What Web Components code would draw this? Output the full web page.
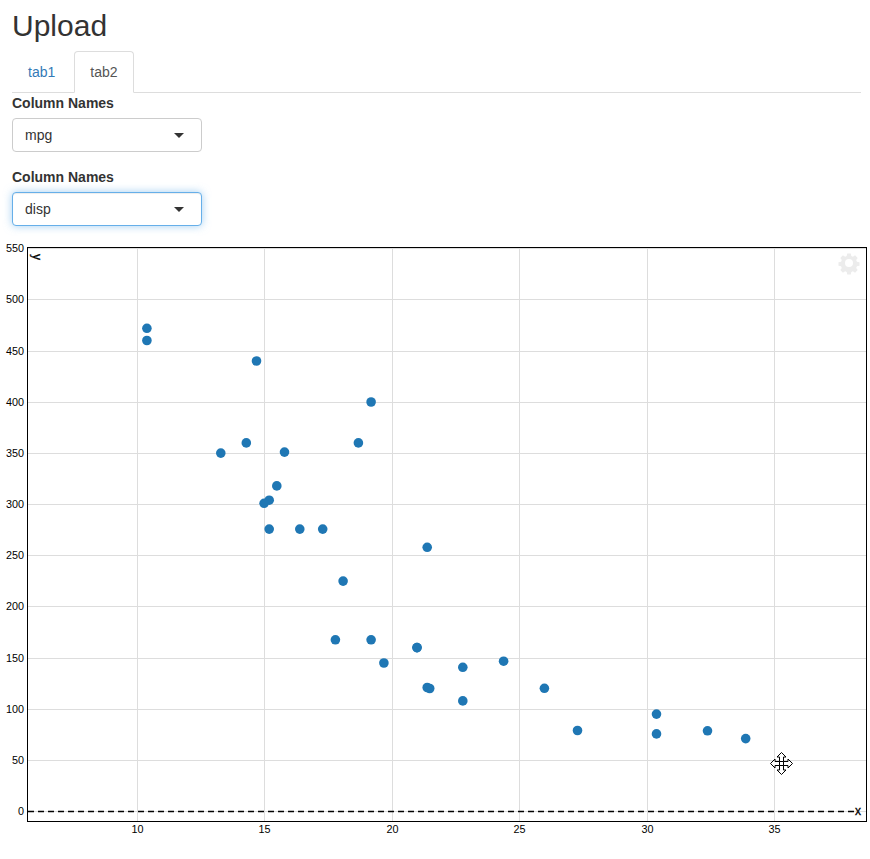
<!DOCTYPE html>
<html>
<head>
<meta charset="utf-8">
<title>Upload</title>
<style>
  html, body { margin: 0; padding: 0; background: #fff; }
  body { font: 14px/20px "Liberation Sans", Arial, sans-serif; color: #333; }
</style>
</head>
<body>
<upload-page></upload-page>

<script>
// Page heading + tab strip + inputs + plot
class UploadPage extends HTMLElement {
  constructor() {
    super();
    this.attachShadow({ mode: 'open' });
    this.shadowRoot.innerHTML = `
      <style>
        :host { display: block; }
        .wrap { padding: 0 9px 0 12px; }
        h2 {
          margin: 0 0 9px 0;
          padding-top: 9px;
          font: 500 30px/33px "Liberation Sans", Arial, sans-serif;
          color: #333;
        }
      </style>
      <div class="wrap">
        <h2>Upload</h2>
        <tab-strip></tab-strip>
        <column-select label="Column Names" value="mpg"></column-select>
        <column-select label="Column Names" value="disp" focused></column-select>
      </div>
      <scatter-plot></scatter-plot>
    `;
  }
}

class TabStrip extends HTMLElement {
  constructor() {
    super();
    this.attachShadow({ mode: 'open' });
    this.shadowRoot.innerHTML = `
      <style>
        :host { display: flex; border-bottom: 1px solid #ddd; height: 41px; }
        a {
          display: block;
          box-sizing: border-box;
          height: 42px;
          padding: 10px 15px;
          margin-right: 3px;
          border: 1px solid transparent;
          border-radius: 4px 4px 0 0;
          color: #337ab7;
          text-decoration: none;
        }
        a.active { color: #555; background: #fff; border-color: #ddd #ddd #fff; }
      </style>
      <a href="#">tab1</a>
      <a href="#" class="active">tab2</a>
    `;
  }
}

class ColumnSelect extends HTMLElement {
  constructor() {
    super();
    this.attachShadow({ mode: 'open' });
  }

  connectedCallback() {
    const focused = this.hasAttribute('focused');
    this.shadowRoot.innerHTML = `
      <style>
        :host { display: block; margin-bottom: 15px; }
        label { display: block; font-weight: 700; margin-bottom: 5px; color: #333; }
        .box {
          box-sizing: border-box;
          width: 190px;
          height: 34px;
          padding: 6px 12px;
          display: flex;
          align-items: center;
          justify-content: space-between;
          background: #fff;
          border: 1px solid #ccc;
          border-radius: 4px;
          color: #333;
        }
        .box.focus {
          border-color: #66afe9;
          box-shadow: inset 0 1px 1px rgba(0,0,0,.075), 0 0 8px rgba(102,175,233,.6);
        }
        .caret {
          width: 0;
          height: 0;
          margin-right: 5px;
          border-style: solid;
          border-width: 5px 5px 0 5px;
          border-color: #333 transparent transparent transparent;
        }
      </style>
      <label>${this.getAttribute('label')}</label>
      <div class="box ${focused ? 'focus' : ''}">
        <span>${this.getAttribute('value')}</span>
        <span class="caret"></span>
      </div>
    `;
  }
}

// mtcars mpg / disp
const POINTS = [
  [21, 160], [21, 160], [22.8, 108], [21.4, 258], [18.7, 360], [18.1, 225], [14.3, 360], [24.4, 146.7],
  [22.8, 140.8], [19.2, 167.6], [17.8, 167.6], [16.4, 275.8], [17.3, 275.8], [15.2, 275.8], [10.4, 472],
  [10.4, 460], [14.7, 440], [32.4, 78.7], [30.4, 75.7], [33.9, 71.1], [21.5, 120.1], [15.5, 318], [15.2, 304],
  [13.3, 350], [19.2, 400], [27.3, 79], [26, 120.3], [30.4, 95.1], [15.8, 351], [19.7, 145], [15, 301], [21.4, 121]
];

class ScatterPlot extends HTMLElement {
  constructor() {
    super();
    this.attachShadow({ mode: 'open' });
  }

  connectedCallback() {
    const sx = (v) => 137.5 + (v - 10) * 25.48;
    const sy = (v) => 811.7 - v * 1.0236;
    let grid = '';
    let labels = '';
    for (let v = 10; v <= 35; v += 5) {
      const x = Math.floor(sx(v)) + 0.5;
      grid += `<line x1="${x}" x2="${x}" y1="248" y2="821"/>`;
      labels += `<text x="${x}" y="833" text-anchor="middle">${v}</text>`;
    }
    for (let v = 0; v <= 550; v += 50) {
      const y = Math.floor(sy(v)) + 0.5;
      grid += `<line x1="28" x2="866" y1="${y}" y2="${y}"/>`;
      labels += `<text x="24" y="${y + 3.5}" text-anchor="end">${v}</text>`;
    }
    const dots = POINTS.map(([a, b]) => `<circle cx="${(sx(a) - 0.8).toFixed(1)}" cy="${(sy(b) - 0.3).toFixed(1)}" r="4.8"/>`).join('');

    this.shadowRoot.innerHTML = `
      <style>
        :host { display: block; height: 618px; }
        svg { display: block; }
        text { font: 10.8px "Liberation Sans", Arial, sans-serif; fill: #000; }
        .axis { font-size: 12px; stroke: #000; stroke-width: .3; }
      </style>
      <svg width="870" height="618" viewBox="0 241 870 618">
        <g stroke="#ddd" stroke-width="1">${grid}</g>
        <line x1="28" x2="855" y1="811.5" y2="811.5" stroke="#000" stroke-width="1.5" stroke-dasharray="6 4"/>
        <rect x="27.5" y="247.5" width="839" height="574" fill="none" stroke="#000"/>
        <g>${labels}</g>
        <text class="axis" transform="translate(33,254) rotate(90)">y</text>
        <text class="axis" x="855" y="815">x</text>
        <g fill="#1f77b4">${dots}</g>
        <g transform="translate(849,263)" fill="#ececec">
          <path fill-rule="evenodd" d="M-1.8-9.5h3.6l.5 2.6 1.6.7 2.2-1.5 2.6 2.6-1.5 2.2.7 1.6 2.6.5v3.6l-2.6.5-.7 1.6 1.5 2.2-2.6 2.6-2.2-1.5-1.6.7-.5 2.6h-3.6l-.5-2.6-1.6-.7-2.2 1.5-2.6-2.6 1.5-2.2-.7-1.6-2.6-.5v-3.6l2.6-.5.7-1.6-1.5-2.2 2.6-2.6 2.2 1.5 1.6-.7zM0-4a4 4 0 1 0 0 8 4 4 0 1 0 0-8z"/>
        </g>
        <g transform="translate(781.5,763.5)" stroke="#000" stroke-width="1">
          <path fill="#fff" d="M0-11 4.5-6.5H2V-2H6.5V-4.5L11 0 6.5 4.5V2H2V6.5H4.5L0 11-4.5 6.5H-2V2H-6.5V4.5L-11 0-6.5-4.5V-2H-2V-6.5H-4.5Z"/>
          <path fill="none" d="M-2-2V2M2-2V2M-2-2H2M-2 2H2"/>
        </g>
      </svg>
    `;
  }
}

customElements.define('tab-strip', TabStrip);
customElements.define('column-select', ColumnSelect);
customElements.define('scatter-plot', ScatterPlot);
customElements.define('upload-page', UploadPage);
</script>
</body>
</html>
